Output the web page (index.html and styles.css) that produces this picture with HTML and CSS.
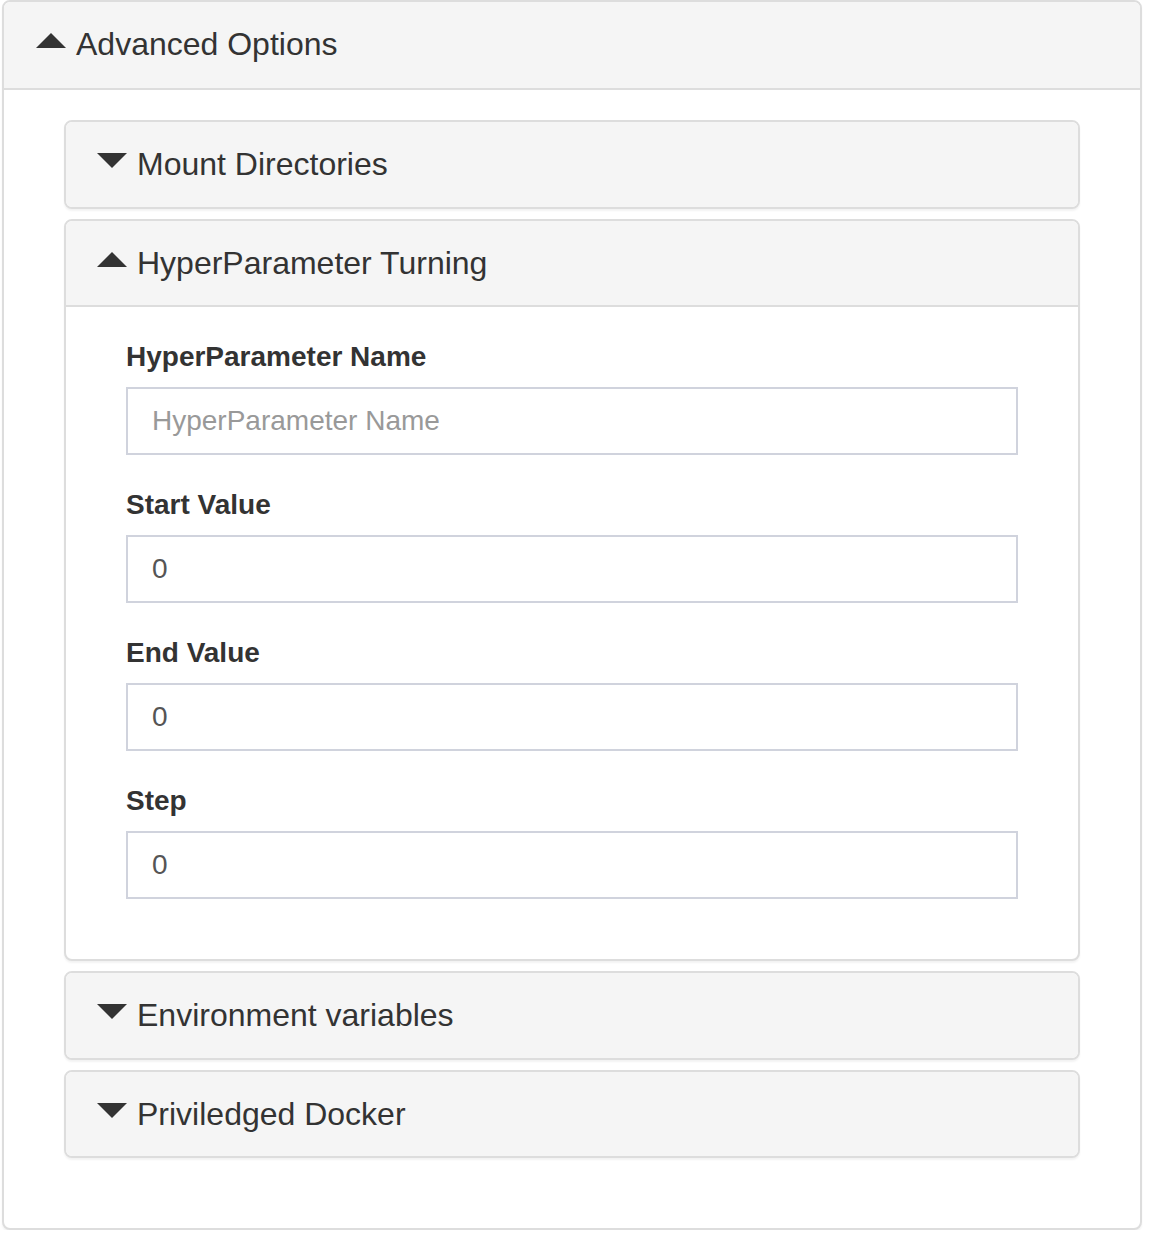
FILE: index.html
```html
<!DOCTYPE html>
<html>
<head>
<meta charset="utf-8">
<title>Advanced Options</title>
<link rel="stylesheet" href="styles.css">
</head>
<body>
<div class="panel outer">
  <div class="panel-heading outer-heading">
    <h4 class="panel-title">
      <svg class="caret" width="30" height="15" viewBox="0 0 30 15"><polygon points="0,15 15,0 30,15" fill="#333"/></svg>
      <span>Advanced Options</span>
    </h4>
  </div>
  <div class="outer-body">
    <div class="panel-group">
      <div class="panel inner">
        <div class="panel-heading">
          <h4 class="panel-title">
            <svg class="caret" width="30" height="15" viewBox="0 0 30 15"><polygon points="0,0 30,0 15,15" fill="#333"/></svg>
            <span>Mount Directories</span>
          </h4>
        </div>
      </div>
      <div class="panel inner">
        <div class="panel-heading">
          <h4 class="panel-title">
            <svg class="caret" width="30" height="15" viewBox="0 0 30 15"><polygon points="0,15 15,0 30,15" fill="#333"/></svg>
            <span>HyperParameter Turning</span>
          </h4>
        </div>
        <div class="panel-body">
          <div class="form-group">
            <label class="label">HyperParameter Name</label>
            <input class="input" type="text" placeholder="HyperParameter Name">
          </div>
          <div class="form-group">
            <label class="label">Start Value</label>
            <input class="input" type="text" value="0">
          </div>
          <div class="form-group">
            <label class="label">End Value</label>
            <input class="input" type="text" value="0">
          </div>
          <div class="form-group">
            <label class="label">Step</label>
            <input class="input" type="text" value="0">
          </div>
        </div>
      </div>
      <div class="panel inner">
        <div class="panel-heading">
          <h4 class="panel-title">
            <svg class="caret" width="30" height="15" viewBox="0 0 30 15"><polygon points="0,0 30,0 15,15" fill="#333"/></svg>
            <span>Environment variables</span>
          </h4>
        </div>
      </div>
      <div class="panel inner">
        <div class="panel-heading">
          <h4 class="panel-title">
            <svg class="caret" width="30" height="15" viewBox="0 0 30 15"><polygon points="0,0 30,0 15,15" fill="#333"/></svg>
            <span>Priviledged Docker</span>
          </h4>
        </div>
      </div>
    </div>
  </div>
</div>
</body>
</html>
```

FILE: styles.css
```css
* { box-sizing: border-box; }
html, body {
  margin: 0;
  padding: 0;
  background: #fff;
}
body {
  font-family: "Liberation Sans", Arial, Helvetica, sans-serif;
  color: #333;
  font-size: 28px;
  line-height: 40px;
  padding: 0 0 0 2px;
}
.panel {
  background: #fff;
  border: 2px solid #ddd;
  border-radius: 8px;
  box-shadow: 0 2px 2px rgba(0, 0, 0, 0.05);
}
.outer {
  width: 1140px;
}
.panel-heading {
  background: #f5f5f5;
  padding: 20px 30px;
  border-radius: 6px 6px 0 0;
}
.inner .panel-heading {
  border-radius: 6px;
}
.inner .panel-heading:not(:last-child) {
  border-radius: 6px 6px 0 0;
}
.outer-heading {
  padding: 20px 30px 22px;
  border-bottom: 2px solid #ddd;
}
.panel-title {
  margin: 0;
  font-size: 32px;
  font-weight: normal;
  line-height: 44px;
  display: flex;
  align-items: center;
  color: #333;
}
.inner .panel-title {
  line-height: 44.5px;
}
.caret {
  flex: none;
  margin: 0 10px 7px 1px;
}
.outer-heading .caret {
  margin-left: 2px;
}
.outer-body {
  padding: 30px 60px;
}
.panel-group {
  display: flex;
  flex-direction: column;
  gap: 10px;
  margin-bottom: 40px;
}
.panel-body {
  border-top: 2px solid #ddd;
  padding: 30px 60px;
}
.form-group {
  display: flex;
  flex-direction: column;
  margin-bottom: 30px;
}
.label {
  font-weight: bold;
  font-size: 28px;
  line-height: 40px;
  margin-bottom: 10px;
}
.input {
  display: block;
  width: 100%;
  height: 68px;
  padding: 12px 24px;
  font-family: "Liberation Sans", Arial, Helvetica, sans-serif;
  font-size: 28px;
  line-height: 40px;
  color: #555;
  background: #fff;
  border: 2px solid #d0d3dd;
  border-radius: 0;
  outline: none;
}
.input::placeholder {
  color: #999;
}
```
